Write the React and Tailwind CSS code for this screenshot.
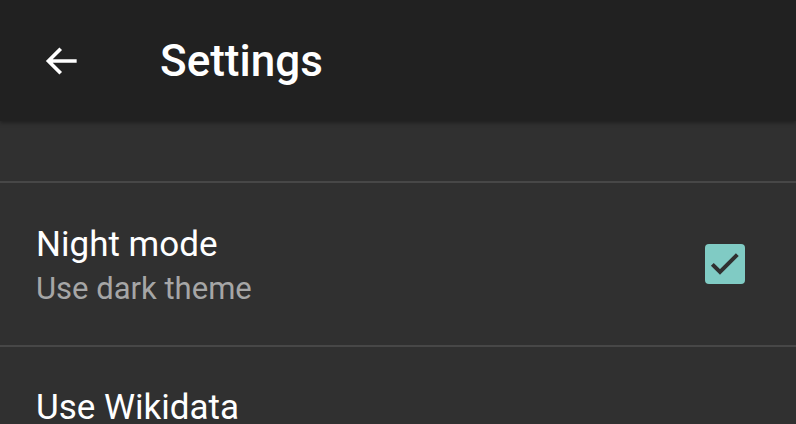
import { useState } from 'react';

// Fila de ajuste con casilla opcional
const FilaAjuste = ({ titulo, subtitulo, marcado, onToggle }) => (
  <div className="h-[164px] flex items-center justify-between pl-9 pr-[51px] border-b-2 border-[#474747]">
    <div className="flex flex-col pt-[3px]">
      <span className="text-[35px] leading-[44px] text-white">{titulo}</span>
      {subtitulo && <span className="mt-[3px] text-[31px] leading-[38px] text-[#a6a6a6]">{subtitulo}</span>}
    </div>
    {onToggle && (
      <button
        onClick={onToggle}
        className={`w-10 h-10 rounded-[4px] flex items-center justify-center ${marcado ? 'bg-[#80cbc4]' : 'border-2 border-[#9e9e9e]'}`}
      >
        {marcado && (
          <svg width="40" height="40" viewBox="0 0 24 24">
            <path d="M4.4 12.2l4.6 4.6 10.4-10.4" fill="none" stroke="#303030" strokeWidth="2.4" />
          </svg>
        )}
      </button>
    )}
  </div>
);

export default function App() {
  const [nocturno, setNocturno] = useState(true);

  return (
    <div className="w-[796px] h-[424px] overflow-hidden bg-[#303030] font-['Roboto',sans-serif]">
      {/* Barra superior */}
      <header className="relative h-[121px] bg-[#212121] flex items-center shadow-[0_2px_4px_rgba(0,0,0,0.35)]">
        <button className="w-[124px] pl-[40px] flex items-center">
          <svg width="44" height="44" viewBox="0 0 24 24">
            <path d="M20 12H4.8M11.3 5.3L4.6 12l6.7 6.7" fill="none" stroke="#fff" strokeWidth="2" />
          </svg>
        </button>
        <h1 className="ml-9 text-[44px] font-medium text-white">Settings</h1>
      </header>

      <div className="h-[62px] border-b-2 border-[#474747]" />

      <FilaAjuste
        titulo="Night mode"
        subtitulo="Use dark theme"
        marcado={nocturno}
        onToggle={() => setNocturno(!nocturno)}
      />

      <div className="pl-9 pt-[39px]">
        <span className="text-[35px] leading-[44px] text-white">Use Wikidata</span>
      </div>
    </div>
  );
}
